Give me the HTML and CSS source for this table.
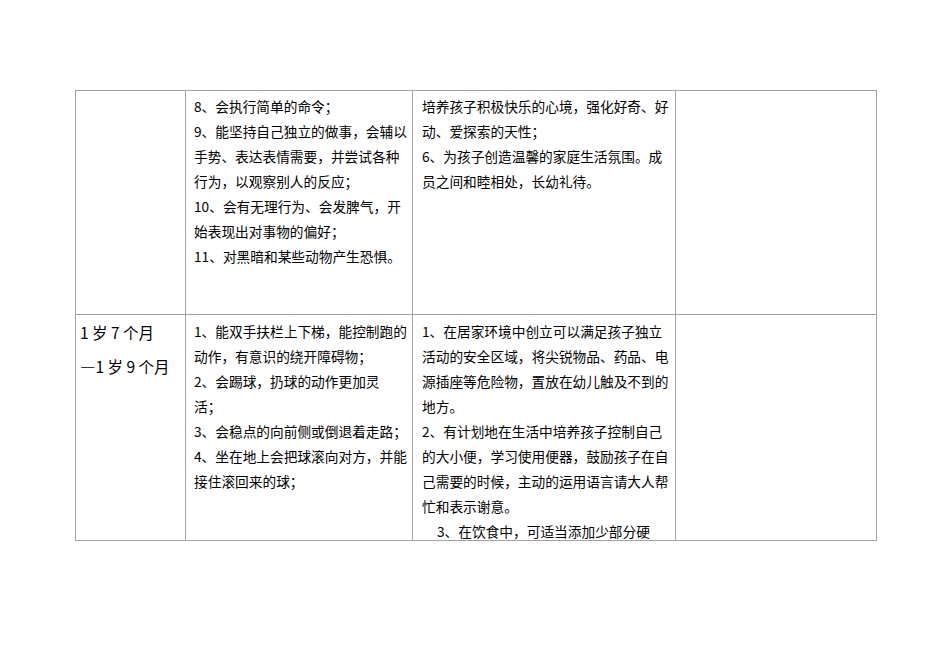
FILE: index.html
```html
<!DOCTYPE html>
<html lang="zh">
<head>
<meta charset="utf-8">
<link rel="stylesheet" href="styles.css">
</head>
<body>
<table class="grid">
  <colgroup>
    <col class="c1"><col class="c2"><col class="c3"><col class="c4">
  </colgroup>
  <tr class="r1">
    <td class="age"><div class="box"></div></td>
    <td class="txt"><div class="box">
      <p>8、会执行简单的命令；</p>
      <p>9、能坚持自己独立的做事，会辅以<br>手势、表达表情需要，并尝试各种<br>行为，以观察别人的反应；</p>
      <p>10、会有无理行为、会发脾气，开<br>始表现出对事物的偏好；</p>
      <p>11、对黑暗和某些动物产生恐惧。</p>
    </div></td>
    <td class="txt wide"><div class="box">
      <p>培养孩子积极快乐的心境，强化好奇、好<br>动、爱探索的天性；</p>
      <p>6、为孩子创造温馨的家庭生活氛围。成<br>员之间和睦相处，长幼礼待。</p>
    </div></td>
    <td><div class="box"></div></td>
  </tr>
  <tr class="r2">
    <td class="age"><div class="box">
      <p>1 岁 7 个月</p>
      <p>—1 岁 9 个月</p>
    </div></td>
    <td class="txt"><div class="box">
      <p>1、能双手扶栏上下梯，能控制跑的<br>动作，有意识的绕开障碍物；</p>
      <p>2、会踢球，扔球的动作更加灵<br>活；</p>
      <p>3、会稳点的向前侧或倒退着走路；</p>
      <p>4、坐在地上会把球滚向对方，并能<br>接住滚回来的球；</p>
    </div></td>
    <td class="txt wide"><div class="box">
      <p>1、在居家环境中创立可以满足孩子独立<br>活动的安全区域，将尖锐物品、药品、电<br>源插座等危险物，置放在幼儿触及不到的<br>地方。</p>
      <p>2、有计划地在生活中培养孩子控制自己<br>的大小便，学习使用便器，鼓励孩子在自<br>己需要的时候，主动的运用语言请大人帮<br>忙和表示谢意。</p>
      <p class="indent">3、在饮食中，可适当添加少部分硬</p>
    </div></td>
    <td><div class="box"></div></td>
  </tr>
</table>
</body>
</html>
```

FILE: styles.css
```css
html, body {
  margin: 0;
  padding: 0;
  background: #ffffff;
}

body {
  font-family: "Noto Sans CJK SC", "Noto Sans", "DejaVu Sans", sans-serif;
  color: #000000;
}

.grid {
  margin: 90px 0 0 75px;
  border-collapse: collapse;
  table-layout: fixed;
  width: 801px;
}

.grid .c1 { width: 110px; }
.grid .c2 { width: 227px; }
.grid .c3 { width: 263px; }
.grid .c4 { width: 201px; }

.grid td {
  border: 1px solid #a3a3a3;
  padding: 0;
  vertical-align: top;
}

.r1 .box { height: 223px; }
.r2 .box { height: 225px; }

.box {
  overflow: hidden;
}

.box p {
  margin: 0;
  white-space: nowrap;
}

.txt .box {
  padding: 3px 0 0 8px;
  box-sizing: border-box;
  font-size: 13.7px;
  line-height: 25px;
}

.r2 .txt .box {
  padding-top: 4px;
}

.wide .box {
  padding-left: 9px;
}

.indent {
  padding-left: 15px;
}

.age .box {
  padding: 0 0 0 4px;
  box-sizing: border-box;
  font-size: 15.5px;
  line-height: 34px;
}
```
